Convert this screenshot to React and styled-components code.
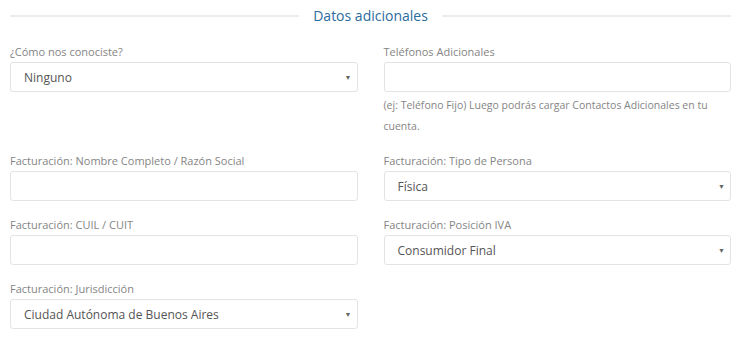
import React from "react";
import styled, { createGlobalStyle } from "styled-components";

const GlobalStyle = createGlobalStyle`
  body {
    margin: 0;
    background: #fff;
    font-family: "Open Sans", "Liberation Sans", sans-serif;
  }
`;

const Page = styled.div`
  padding: 6px 17px 0 10px;
`;

const Legend = styled.div`
  display: flex;
  align-items: center;
  gap: 14px;
  height: 19px;
  margin-bottom: 19px;

  &::before,
  &::after {
    content: "";
    flex: 1;
    height: 2px;
    background: #ececec;
  }
`;

const LegendTitle = styled.span`
  font-size: 14px;
  color: #2b6c9e;
  line-height: 19px;
`;

const Grid = styled.div`
  display: grid;
  grid-template-columns: 1fr 1fr;
  column-gap: 26px;
  align-items: start;
`;

const Group = styled.div`
  display: flex;
  flex-direction: column;
  margin-bottom: 16px;
`;

const Label = styled.label`
  font-size: 11px;
  line-height: 16px;
  color: #858585;
  margin-bottom: 2px;
`;

const Input = styled.input`
  box-sizing: border-box;
  height: 30px;
  width: 100%;
  border: 1px solid #e3e3e3;
  border-radius: 3px;
  background: #fff;
  padding: 0 13px;
  font-family: inherit;
  font-size: 12px;
  outline: none;
`;

const SelectBox = styled.div`
  box-sizing: border-box;
  height: 30px;
  display: flex;
  align-items: center;
  justify-content: space-between;
  border: 1px solid #e3e3e3;
  border-radius: 3px;
  background: #fff;
  padding: 0 5px 0 13px;
  font-size: 12px;
  color: #555;
`;

const Caret = styled.span`
  font-size: 7px;
  color: #666;
  line-height: 1;
`;

const Help = styled.p`
  margin: 3px 0 0;
  font-size: 10.5px;
  line-height: 21px;
  color: #858585;
`;

function Select({ value }) {
  return (
    <SelectBox>
      <span>{value}</span>
      <Caret>▼</Caret>
    </SelectBox>
  );
}

export default function App() {
  return (
    <Page>
      <GlobalStyle />
      <Legend>
        <LegendTitle>Datos adicionales</LegendTitle>
      </Legend>
      <Grid>
        <Group>
          <Label>¿Cómo nos conociste?</Label>
          <Select value="Ninguno" />
        </Group>
        <Group>
          <Label>Teléfonos Adicionales</Label>
          <Input />
          <Help>
            (ej: Teléfono Fijo) Luego podrás cargar Contactos Adicionales en tu
            cuenta.
          </Help>
        </Group>

        <Group>
          <Label>Facturación: Nombre Completo / Razón Social</Label>
          <Input />
        </Group>
        <Group>
          <Label>Facturación: Tipo de Persona</Label>
          <Select value="Física" />
        </Group>

        <Group>
          <Label>Facturación: CUIL / CUIT</Label>
          <Input />
        </Group>
        <Group>
          <Label>Facturación: Posición IVA</Label>
          <Select value="Consumidor Final" />
        </Group>

        <Group>
          <Label>Facturación: Jurisdicción</Label>
          <Select value="Ciudad Autónoma de Buenos Aires" />
        </Group>
      </Grid>
    </Page>
  );
}
